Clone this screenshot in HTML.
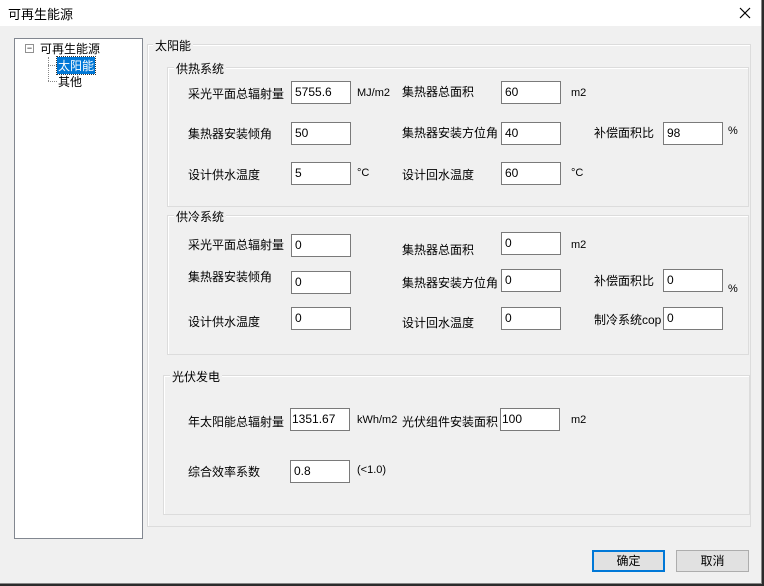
<!DOCTYPE html><html><head><meta charset="utf-8"><style>
body{margin:0;width:764px;height:586px;background:#2b2b2b;position:relative;overflow:hidden;font-family:"Liberation Sans","Noto Sans CJK SC",sans-serif;font-size:12px;color:#000}
.win{position:absolute;left:0;top:0;width:761px;height:583px;background:#f0f0f0;border-right:1px solid #888;border-bottom:1px solid #888}
.title{position:absolute;left:0;top:0;width:761px;height:26px;background:#fff}
.a{position:absolute;white-space:nowrap}
.box{position:absolute;border:1px solid #dcdcdc;box-shadow:inset 1px 1px 0 #fff}
.lg{position:absolute;background:#f0f0f0;padding:0 2px;font-size:12px}
.in{position:absolute;background:#fff;border:1px solid #7a7a7a;font-size:12px;line-height:20px;padding-left:3px;box-sizing:border-box;width:60px;height:23px}
.btn{position:absolute;width:73px;height:22px;background:#e1e1e1;border:1px solid #adadad;text-align:center;line-height:21px;box-sizing:border-box}
</style></head><body><div class="win">
<div class="title"><span class="a" style="left:8px;top:4px;font-size:13px">可再生能源</span><svg class="a" style="left:739px;top:7px" width="12" height="12"><path d="M1 1L11 11M11 1L1 11" stroke="#000" stroke-width="1.2"/></svg></div>
<div class="a" style="left:14px;top:38px;width:127px;height:499px;background:#fff;border:1px solid #828790"></div>
<div class="a" style="left:25px;top:44px;width:7px;height:7px;border:1px solid #919191;background:#fff;font-size:9px;line-height:6px;text-align:center">−</div>
<span class="a" style="left:40px;top:40px">可再生能源</span>
<div class="a" style="left:48px;top:57px;width:0;height:24px;border-left:1px dotted #888"></div>
<div class="a" style="left:48px;top:65px;width:9px;border-top:1px dotted #888"></div>
<div class="a" style="left:48px;top:81px;width:9px;border-top:1px dotted #888"></div>
<span class="a" style="left:57px;top:57px;background:#0078d7;color:#fff;padding:0 1px;outline:1px dotted #333">太阳能</span>
<span class="a" style="left:58px;top:73px">其他</span>

<div class="box" style="left:147px;top:44px;width:602px;height:481px"></div>
<span class="lg" style="left:153px;top:37px">太阳能</span>

<div class="box" style="left:167px;top:67px;width:580px;height:138px"></div>
<span class="lg" style="left:174px;top:60px">供热系统</span>
<span class="a" style="left:188px;top:85px">采光平面总辐射量</span><div class="in" style="left:291px;top:81px">5755.6</div><span class="a" style="left:357px;top:87px;font-size:11px">MJ/m2</span>
<span class="a" style="left:402px;top:83px">集热器总面积</span><div class="in" style="left:501px;top:81px">60</div><span class="a" style="left:571px;top:87px;font-size:11px">m2</span>
<span class="a" style="left:188px;top:125px">集热器安装倾角</span><div class="in" style="left:291px;top:122px">50</div>
<span class="a" style="left:402px;top:124px">集热器安装方位角</span><div class="in" style="left:501px;top:122px">40</div>
<span class="a" style="left:594px;top:124px">补偿面积比</span><div class="in" style="left:663px;top:122px">98</div><span class="a" style="left:728px;top:125px;font-size:11px">%</span>
<span class="a" style="left:188px;top:166px">设计供水温度</span><div class="in" style="left:291px;top:162px">5</div><span class="a" style="left:357px;top:167px;font-size:11px">°C</span>
<span class="a" style="left:402px;top:166px">设计回水温度</span><div class="in" style="left:501px;top:162px">60</div><span class="a" style="left:571px;top:167px;font-size:11px">°C</span>

<div class="box" style="left:167px;top:215px;width:580px;height:138px"></div>
<span class="lg" style="left:174px;top:208px">供冷系统</span>
<span class="a" style="left:188px;top:236px">采光平面总辐射量</span><div class="in" style="left:291px;top:234px">0</div>
<span class="a" style="left:402px;top:241px">集热器总面积</span><div class="in" style="left:501px;top:232px">0</div><span class="a" style="left:571px;top:239px;font-size:11px">m2</span>
<span class="a" style="left:188px;top:268px">集热器安装倾角</span><div class="in" style="left:291px;top:271px">0</div>
<span class="a" style="left:402px;top:274px">集热器安装方位角</span><div class="in" style="left:501px;top:269px">0</div>
<span class="a" style="left:594px;top:272px">补偿面积比</span><div class="in" style="left:663px;top:269px">0</div><span class="a" style="left:728px;top:283px;font-size:11px">%</span>
<span class="a" style="left:188px;top:313px">设计供水温度</span><div class="in" style="left:291px;top:307px">0</div>
<span class="a" style="left:402px;top:314px">设计回水温度</span><div class="in" style="left:501px;top:307px">0</div>
<span class="a" style="left:594px;top:311px">制冷系统cop</span><div class="in" style="left:663px;top:307px">0</div>

<div class="box" style="left:163px;top:375px;width:585px;height:138px"></div>
<span class="lg" style="left:170px;top:368px">光伏发电</span>
<span class="a" style="left:188px;top:413px">年太阳能总辐射量</span><div class="in" style="left:290px;top:408px;padding-left:1px">1351.67</div><span class="a" style="left:357px;top:414px;font-size:11px">kWh/m2</span>
<span class="a" style="left:402px;top:413px">光伏组件安装面积</span><div class="in" style="left:500px;top:408px;padding-left:1px">100</div><span class="a" style="left:571px;top:414px;font-size:11px">m2</span>
<span class="a" style="left:188px;top:463px">综合效率系数</span><div class="in" style="left:290px;top:460px">0.8</div><span class="a" style="left:357px;top:464px;font-size:11px">(&lt;1.0)</span>

<div class="btn" style="left:592px;top:550px;border:2px solid #0078d7;line-height:19px">确定</div>
<div class="btn" style="left:676px;top:550px">取消</div>
</div></body></html>
